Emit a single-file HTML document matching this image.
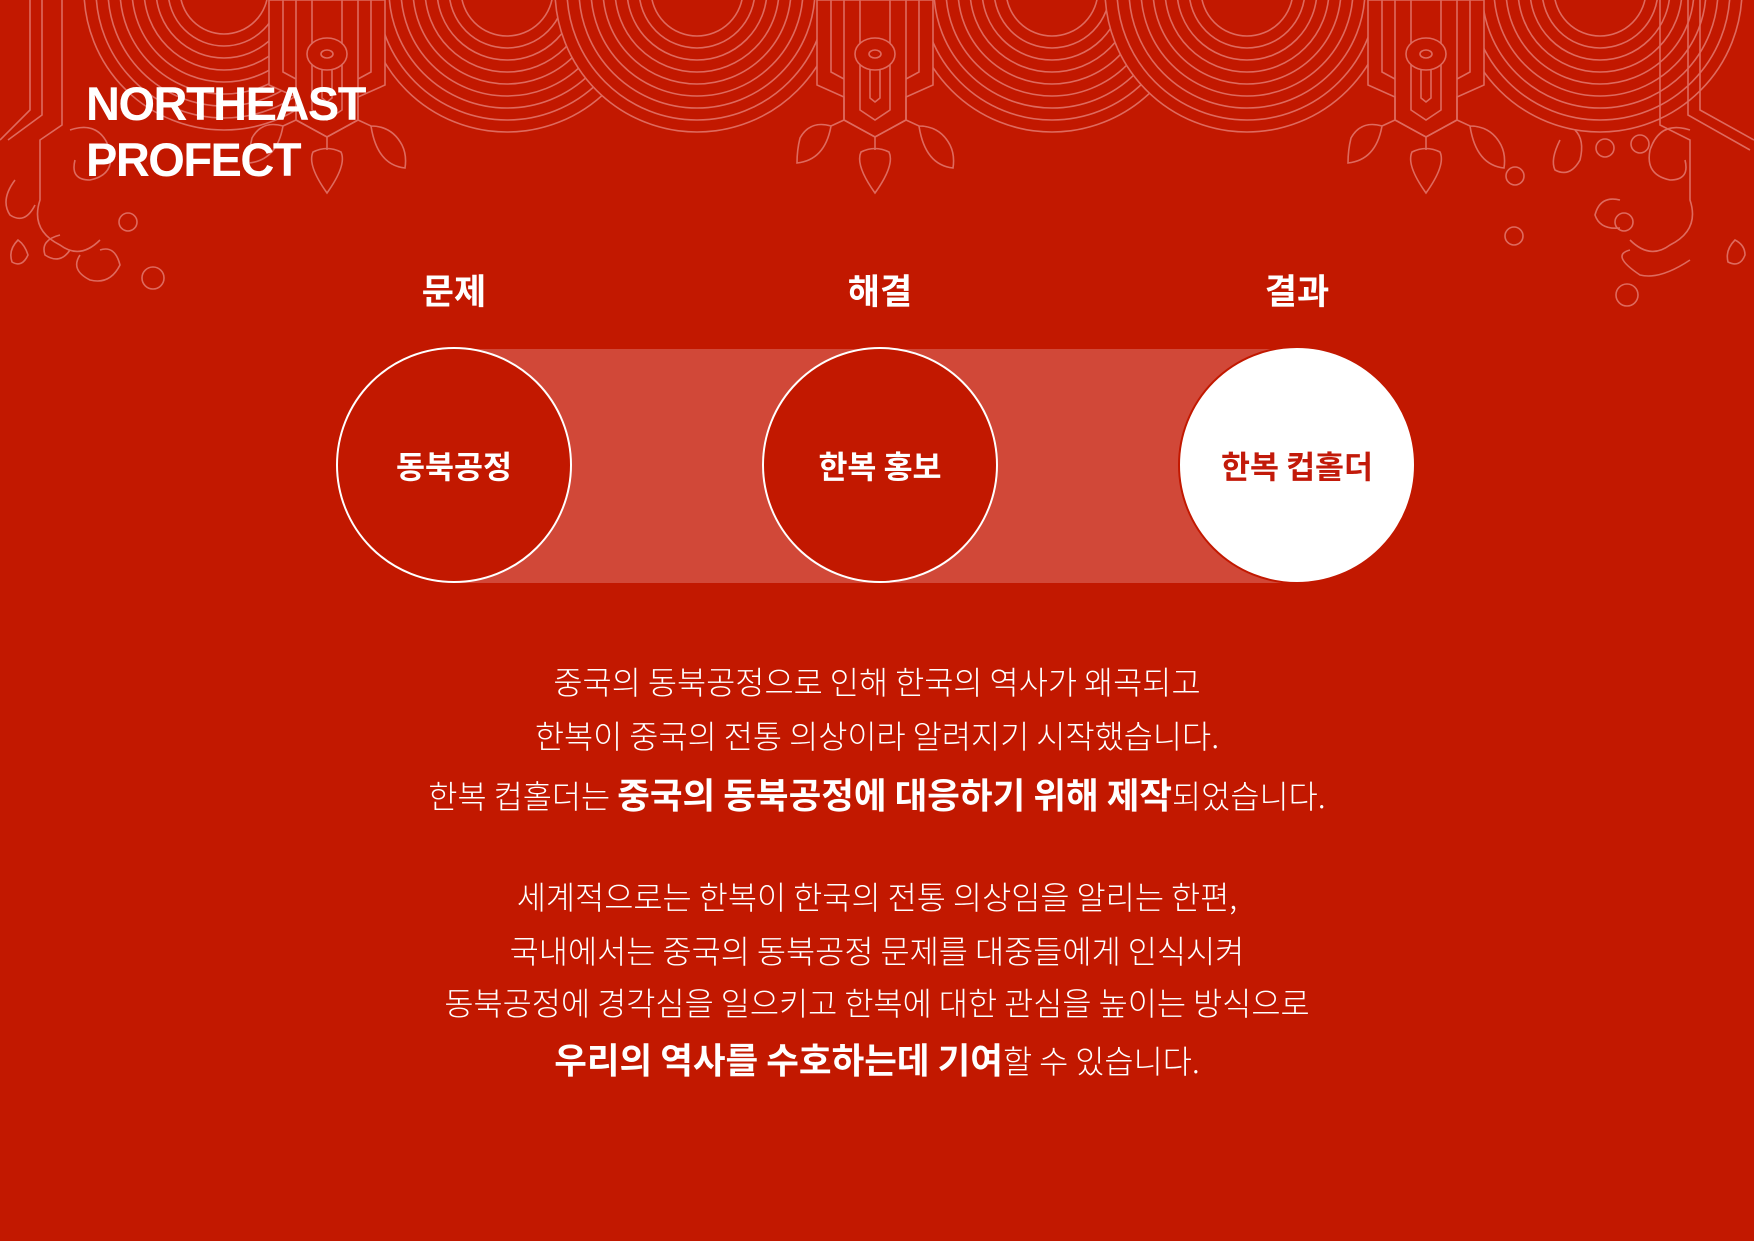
<!DOCTYPE html>
<html><head><meta charset="utf-8">
<style>
*{margin:0;padding:0;box-sizing:border-box}
html,body{width:1754px;height:1241px;overflow:hidden;background:#c21800}
body{position:relative;font-family:"Liberation Sans","Noto Sans CJK KR",sans-serif;color:#fff}
svg.deco{position:absolute;left:0;top:0}
.title{position:absolute;left:86px;top:76px;font-size:47px;font-weight:700;line-height:56px;letter-spacing:-1.5px}
.lbl{position:absolute;top:264px;width:200px;margin-left:-100px;text-align:center;font-size:35px;font-weight:700;font-family:"Noto Sans CJK KR",sans-serif}
.band{position:absolute;left:454px;top:349px;width:843px;height:234px;background:#d14838}
.c{position:absolute;width:236px;height:236px;margin-left:-118px;top:347px;border-radius:50%;border:2px solid #fff;background:#c21800;display:flex;align-items:center;justify-content:center;font-family:"Noto Sans CJK KR",sans-serif;font-weight:700;font-size:31.5px}
.c.w{background:#fff;color:#c21a0a;border-color:#c21800;width:238px;height:238px;margin-left:-119px;top:346px}
.txt{position:absolute;left:0;width:1754px;text-align:center;font-family:"Noto Sans CJK KR",sans-serif;font-weight:300;font-size:31.7px;line-height:1;white-space:nowrap}
.txt b{font-weight:700;font-size:35.5px}
</style></head><body>
<svg class="deco" width="1754" height="320" viewBox="0 0 1754 320" fill="#c21800" stroke="#de6a5e" stroke-width="1.6">
<g>
<g transform="translate(224,-10)"><circle r="140"/><circle r="128"/><circle r="116"/><circle r="104"/><circle r="92"/><circle r="80"/><circle r="68"/><circle r="56"/><circle r="44"/></g>
<g transform="translate(600,-60)"><circle r="140"/><circle r="128"/><circle r="116"/><circle r="104"/><circle r="92"/><circle r="80"/><circle r="68"/><circle r="56"/></g>
<g transform="translate(507,-10)"><circle r="142"/><circle r="130"/><circle r="118"/><circle r="106"/><circle r="94"/><circle r="82"/><circle r="70"/><circle r="58"/><circle r="46"/></g>
<g transform="translate(697,-10)"><circle r="142"/><circle r="130"/><circle r="118"/><circle r="106"/><circle r="94"/><circle r="82"/><circle r="70"/><circle r="58"/><circle r="46"/></g>
<g transform="translate(1150,-60)"><circle r="140"/><circle r="128"/><circle r="116"/><circle r="104"/><circle r="92"/><circle r="80"/><circle r="68"/><circle r="56"/></g>
<g transform="translate(1052,-10)"><circle r="142"/><circle r="130"/><circle r="118"/><circle r="106"/><circle r="94"/><circle r="82"/><circle r="70"/><circle r="58"/><circle r="46"/></g>
<g transform="translate(1247,-10)"><circle r="142"/><circle r="130"/><circle r="118"/><circle r="106"/><circle r="94"/><circle r="82"/><circle r="70"/><circle r="58"/><circle r="46"/></g>
<g transform="translate(1600,-10)"><circle r="142"/><circle r="130"/><circle r="118"/><circle r="106"/><circle r="94"/><circle r="82"/><circle r="70"/><circle r="58"/><circle r="46"/></g>
</g>
<defs>
<g id="pend">
<path d="M-58,0V85L-31,97V120L0,137L31,120V97L58,85V0Z"/>
<path d="M-44,0V72L-31,79M44,0V72L31,79" fill="none"/>
<path d="M-31,0V120L0,137L31,120V0" fill="none"/>
<path d="M-15,0V110L0,120L15,110V0" fill="none"/>
<ellipse cx="0" cy="54" rx="20" ry="16"/>
<ellipse cx="0" cy="54" rx="6" ry="4"/>
<path d="M-5,70V98L0,102L5,98V70" fill="none"/>
<path d="M0,137V150M-14,152Q0,145 14,152Q20,165 0,193Q-20,165 -14,152Z" fill="none"/>
<path d="M-31,120L-44,126Q-65,120 -75,138Q-78,150 -78,163Q-50,160 -44,126M31,120L44,126Q65,126 75,145Q80,155 78,168Q50,165 44,126" fill="none"/>
</g>
</defs>
<use href="#pend" x="327" y="0"/>
<use href="#pend" x="875" y="0"/>
<use href="#pend" x="1426" y="0"/>
<g fill="none">
<path d="M30,0V110L0,140M42,0V115L8,140M62,0V125L40,140V200Q30,230 60,245Q80,260 100,240"/>
<path d="M70,130Q100,120 110,150Q115,175 90,180Q70,180 75,160"/>
<path d="M15,180Q0,200 10,215Q25,225 35,205"/>
<path d="M60,235Q40,240 45,255Q60,265 70,250"/>
<path d="M100,250Q115,245 120,265Q110,285 90,280Q70,270 80,255"/>
<circle cx="128" cy="222" r="9"/><circle cx="153" cy="278" r="11"/>
<path d="M18,240Q8,250 12,262Q22,268 28,255Q25,245 18,240Z"/>
<path d="M1700,0V110L1754,140M1688,0V115L1750,150M1660,0V125L1690,140V200Q1700,230 1670,245Q1650,260 1630,240"/>
<path d="M1690,130Q1660,120 1650,150Q1645,175 1670,180Q1690,180 1685,160"/>
<path d="M1620,200Q1600,195 1595,215Q1600,230 1620,228"/>
<path d="M1630,250Q1610,255 1640,275Q1660,280 1690,260"/>
<path d="M1560,140Q1550,160 1555,170Q1570,178 1580,160Q1585,140 1575,130"/>
<circle cx="1515" cy="176" r="9"/><circle cx="1605" cy="148" r="9"/><circle cx="1640" cy="144" r="9"/><circle cx="1624" cy="222" r="9"/><circle cx="1627" cy="295" r="11"/><circle cx="1514" cy="236" r="9"/>
<path d="M1735,240Q1725,250 1728,262Q1740,268 1745,255Q1745,245 1735,240Z"/>
</g>
</svg>

<div class="title">NORTHEAST<br>PROFECT</div>

<div class="lbl" style="left:454px">문제</div>
<div class="lbl" style="left:880px">해결</div>
<div class="lbl" style="left:1297px">결과</div>

<div class="band"></div>
<div class="c" style="left:454px">동북공정</div>
<div class="c" style="left:880px">한복 홍보</div>
<div class="c w" style="left:1297px">한복 컵홀더</div>

<div class="txt" style="top:666px">중국의 동북공정으로 인해 한국의 역사가 왜곡되고</div>
<div class="txt" style="top:720px">한복이 중국의 전통 의상이라 알려지기 시작했습니다.</div>
<div class="txt" style="top:776px">한복 컵홀더는 <b>중국의 동북공정에 대응하기 위해 제작</b>되었습니다.</div>
<div class="txt" style="top:881px">세계적으로는 한복이 한국의 전통 의상임을 알리는 한편,</div>
<div class="txt" style="top:935px">국내에서는 중국의 동북공정 문제를 대중들에게 인식시켜</div>
<div class="txt" style="top:987px">동북공정에 경각심을 일으키고 한복에 대한 관심을 높이는 방식으로</div>
<div class="txt" style="top:1041px"><b>우리의 역사를 수호하는데 기여</b>할 수 있습니다.</div>
</body></html>
